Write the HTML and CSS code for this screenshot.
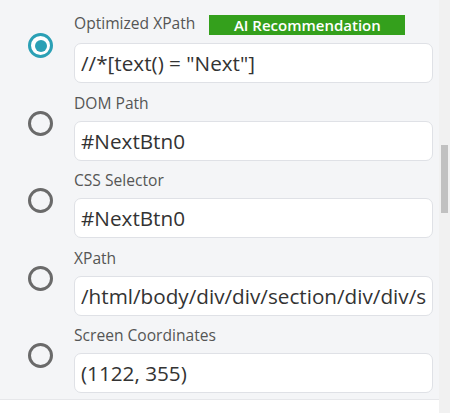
FILE: index.html
```html
<!DOCTYPE html>
<html>
<head>
<meta charset="utf-8">
<link rel="stylesheet" href="styles.css">
</head>
<body>
<div class="app">
  <div class="main">
    <div class="list">
      <div class="row">
        <div class="radio-col"><span class="radio radio-on"><span class="dot"></span></span></div>
        <div class="field">
          <div class="label-row label-row-first">
            <span class="label label-first">Optimized XPath</span>
            <span class="badge">AI Recommendation</span>
          </div>
          <input class="box" readonly value='//*[text() = "Next"]'>
        </div>
      </div>
      <div class="row">
        <div class="radio-col"><span class="radio"></span></div>
        <div class="field">
          <div class="label-row"><span class="label">DOM Path</span></div>
          <input class="box" readonly value="#NextBtn0">
        </div>
      </div>
      <div class="row">
        <div class="radio-col"><span class="radio"></span></div>
        <div class="field">
          <div class="label-row"><span class="label">CSS Selector</span></div>
          <input class="box" readonly value="#NextBtn0">
        </div>
      </div>
      <div class="row">
        <div class="radio-col"><span class="radio"></span></div>
        <div class="field">
          <div class="label-row"><span class="label">XPath</span></div>
          <input class="box" readonly value="/html/body/div/div/section/div/div/section/div/button">
        </div>
      </div>
      <div class="row">
        <div class="radio-col"><span class="radio"></span></div>
        <div class="field">
          <div class="label-row"><span class="label">Screen Coordinates</span></div>
          <input class="box" readonly value="(1122, 355)">
        </div>
      </div>
    </div>
    <div class="footer"></div>
  </div>
  <div class="scrollbar"><div class="thumb"></div></div>
</div>
</body>
</html>
```
FILE: styles.css
```css
* { box-sizing: border-box; }
html, body {
  margin: 0;
  padding: 0;
  height: 413px;
  overflow: hidden;
  font-family: "Open Sans", "Noto Sans", sans-serif;
  background: #ffffff;
}
.app {
  display: flex;
  height: 413px;
}
.main {
  flex: 1;
  display: flex;
  flex-direction: column;
}
.list {
  background: #f4f5f7;
  padding: 14px 6px 6px 0;
  display: flex;
  flex-direction: column;
  gap: 8.5px;
}
.row {
  display: flex;
}
.radio-col {
  width: 74px;
  flex: none;
  padding-left: 28px;
  padding-top: 19px;
}
.radio {
  width: 25px;
  height: 25px;
  border: 3px solid #6a6a6a;
  border-radius: 50%;
  display: flex;
  align-items: center;
  justify-content: center;
}
.radio-on {
  border-color: #2ba0b5;
  background: #ffffff;
}
.dot {
  width: 12px;
  height: 12px;
  border-radius: 50%;
  background: #2ba0b5;
}
.field {
  flex: 1;
  min-width: 0;
  display: flex;
  flex-direction: column;
  gap: 7px;
}
.label-row {
  height: 22px;
  display: flex;
  align-items: flex-start;
}
.label {
  font-size: 15.6px;
  line-height: 22px;
  color: #555555;
}
.label-first {
  line-height: 18px;
}
.badge {
  margin-left: 14px;
  margin-top: 1px;
  width: 196px;
  height: 20px;
  background: #34a01c;
  color: #ffffff;
  font-size: 15px;
  font-weight: 600;
  line-height: 20px;
  text-align: center;
}
.box {
  display: block;
  width: 100%;
  height: 40px;
  margin: 0;
  border: 1px solid #dfe1e6;
  border-radius: 7px;
  background: #ffffff;
  padding: 0 6px;
  font-family: inherit;
  font-size: 20.7px;
  color: #333333;
  outline: none;
}
.footer {
  flex: 1;
  background: #ffffff;
  border-top: 1px solid #e6e7ea;
}
.scrollbar {
  width: 11px;
  flex: none;
  background: #f1f1f1;
  padding-left: 2px;
  padding-top: 145px;
}
.thumb {
  width: 7px;
  height: 68px;
  background: #c1c1c1;
}
```
